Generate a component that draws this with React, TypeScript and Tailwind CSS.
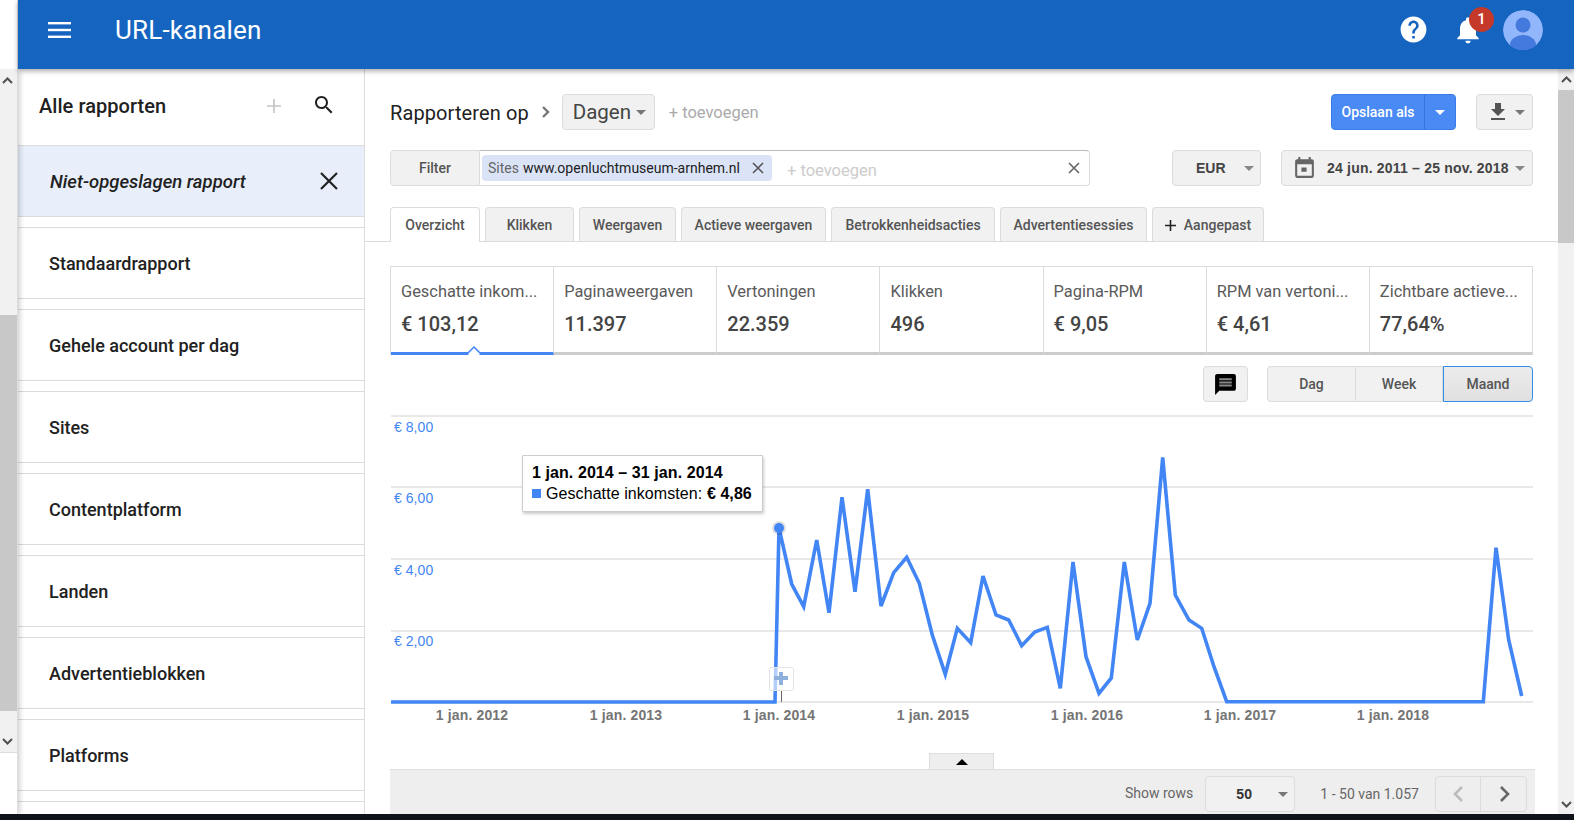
import React from "react";

const pts: [number, number][] = [
  [391, 702], [775, 702], [779, 528], [791.7, 584], [803.7, 606.7], [816.7, 540], [829, 612.7], [842, 497.3],
  [855, 591.7], [867.7, 489.3], [881, 606], [893.7, 572.7], [906.7, 557.3], [919.3, 583.3], [932.3, 635],
  [945.3, 674.3], [957.3, 628.3], [970.7, 642.7], [983, 576], [996, 615], [1008.7, 620], [1021.7, 645.7],
  [1034.7, 632], [1047.3, 627.3], [1060.3, 688.3], [1073, 562], [1086, 656.7], [1099, 693.3], [1111.3, 678],
  [1124.3, 562], [1137.3, 640], [1150, 603.3], [1162.7, 457.3], [1175.3, 595], [1189, 620], [1201.7, 628.3],
  [1214, 666.7], [1226.7, 701.7], [1483.3, 701.7], [1496, 547.7], [1508.7, 640], [1521.7, 696],
];

const Caret = ({ className = "" }: { className?: string }) => (
  <svg width="10" height="5" viewBox="0 0 10 5" className={className}>
    <path d="M0 0h10L5 5z" fill="currentColor" />
  </svg>
);

const Chev = ({ up }: { up?: boolean }) => (
  <svg width="11" height="7" viewBox="0 0 11 7" fill="none" stroke="#505050" strokeWidth="2">
    <path d={up ? "M1 6l4.5-4.5L10 6" : "M1 1l4.5 4.5L10 1"} />
  </svg>
);

const rows = ["Standaardrapport", "Gehele account per dag", "Sites", "Contentplatform", "Landen", "Advertentieblokken", "Platforms"];
const tabs = [
  ["Klikken", "w-[89px]"],
  ["Weergaven", "w-[97px]"],
  ["Actieve weergaven", "w-[145px]"],
  ["Betrokkenheidsacties", "w-[164px]"],
  ["Advertentiesessies", "w-[147px]"],
];
const metrics = [
  ["Geschatte inkom...", "€ 103,12"],
  ["Paginaweergaven", "11.397"],
  ["Vertoningen", "22.359"],
  ["Klikken", "496"],
  ["Pagina-RPM", "€ 9,05"],
  ["RPM van vertoni...", "€ 4,61"],
  ["Zichtbare actieve...", "77,64%"],
];
const arial = { fontFamily: "'Liberation Sans', Arial, sans-serif" };

export default function App() {
  return (
    <div className="w-[1574px] h-[820px] overflow-hidden flex flex-col bg-white font-[family-name:Roboto,sans-serif]">
      <div className="flex h-[69px] shrink-0 relative z-20">
        <div className="w-[18px] bg-white border-r border-[#ddd]" />
        <header className="flex-1 bg-[#1565c0] shadow-[0_2px_5px_rgba(0,0,0,0.35)] flex items-center pb-[10px] text-white">
          <svg width="23" height="16" viewBox="0 0 23 16" className="ml-[30px]" fill="#fff">
            <rect width="23" height="2.4" />
            <rect y="6.8" width="23" height="2.4" />
            <rect y="13.6" width="23" height="2.4" />
          </svg>
          <h1 className="ml-[44px] mt-[2px] text-[26px] tracking-[0.2px] font-normal">URL-kanalen</h1>
          <svg width="31" height="31" viewBox="0 0 24 24" fill="#fff" className="ml-auto">
            <path d="M12 2C6.48 2 2 6.48 2 12s4.48 10 10 10 10-4.48 10-10S17.52 2 12 2zm1 17h-2v-2h2v2zm2.07-7.75l-.9.92C13.45 12.9 13 13.5 13 15h-2v-.5c0-1.1.45-2.1 1.17-2.83l1.24-1.26c.37-.36.59-.86.59-1.41 0-1.1-.9-2-2-2s-2 .9-2 2H8c0-2.21 1.79-4 4-4s4 1.79 4 4c0 .88-.36 1.68-.93 2.25z" />
          </svg>
          <div className="relative ml-[23px] w-[32px] h-[32px]">
            <svg width="32" height="32" viewBox="0 0 24 24" fill="#fff">
              <path d="M12 22c1.1 0 2-.9 2-2h-4c0 1.1.89 2 2 2zm6-6v-5c0-3.07-1.64-5.64-4.5-6.32V4c0-.83-.67-1.5-1.5-1.5s-1.5.67-1.5 1.5v.68C7.63 5.36 6 7.92 6 11v5l-2 2v1h16v-1l-2-2z" />
            </svg>
            <span className="absolute left-[17px] top-[-7px] w-[25px] h-[25px] rounded-full bg-[#c5392b] text-white text-[15px] font-medium flex items-center justify-center">1</span>
          </div>
          <svg width="40" height="40" viewBox="0 0 40 40" className="ml-[19px] mr-[31px] rounded-full">
            <circle cx="20" cy="20" r="20" fill="#92b6fb" />
            <circle cx="20" cy="15" r="7.5" fill="#4479dd" />
            <ellipse cx="20" cy="35" rx="13" ry="10" fill="#4479dd" />
          </svg>
        </header>
      </div>

      <div className="flex h-[745px] shrink-0 overflow-hidden">
        <div className="w-[18px] shrink-0 relative z-10 bg-white border-r border-[#ddd] shadow-[2px_0_5px_rgba(0,0,0,0.18)]">
          <div className="h-[684px] bg-[#f1f1f1] border-b border-[#ddd] flex flex-col">
            <div className="h-[22px] pr-[2px] flex items-center justify-center"><Chev up /></div>
            <div className="h-[224px]" />
            <div className="h-[396px] bg-[#c8c8c8]" />
            <div className="flex-1 pt-[20px] pr-[2px] flex items-center justify-center"><Chev /></div>
          </div>
        </div>

        <aside className="w-[347px] shrink-0 border-r border-[#ddd] overflow-hidden">
          <div className="h-[76px] flex items-center pl-[21px] text-[#212121]">
            <h2 className="text-[20px] tracking-[0.05px] font-medium -mt-[3px]">Alle rapporten</h2>
            <svg width="14" height="14" viewBox="0 0 14 14" stroke="#c4c4c4" strokeWidth="1.6" className="ml-auto -mt-[3px]">
              <path d="M7 0v14M0 7h14" />
            </svg>
            <svg width="24" height="24" viewBox="0 0 24 24" fill="#212121" className="ml-[31px] mr-[28px] -mt-[4px]">
              <path d="M15.5 14h-.79l-.28-.27C15.41 12.59 16 11.11 16 9.5 16 5.91 13.09 3 9.5 3S3 5.91 3 9.5 5.91 16 9.5 16c1.61 0 3.09-.59 4.23-1.57l.27.28v.79l5 4.99L20.49 19l-4.99-5zm-6 0C7.01 14 5 11.99 5 9.5S7.01 5 9.5 5 14 7.01 14 9.5 11.99 14 9.5 14z" />
            </svg>
          </div>
          <div className="h-[72px] bg-[#e8effb] border-y border-[#dcdcdc] flex items-center pl-[32px]">
            <span className="italic mt-[3px] text-[18.5px] font-medium text-[#212121]">Niet-opgeslagen rapport</span>
            <svg width="18" height="18" viewBox="0 0 18 18" stroke="#212121" strokeWidth="2.2" className="ml-auto mr-[26px]">
              <path d="M1 1l16 16M17 1L1 17" />
            </svg>
          </div>
          <div className="flex flex-col gap-[10px] pt-[10px]">
            {rows.map((r) => (
              <div key={r} className="h-[72px] shrink-0 border-y border-[#dcdcdc] flex items-center pl-[31px] text-[18px] font-medium text-[#212121]">
                {r}
              </div>
            ))}
            <div className="h-[72px] shrink-0 border-t border-[#dcdcdc]" />
          </div>
        </aside>

        <main className="w-[1193px] shrink-0 overflow-hidden px-[25px] pt-[25px]">
          <div className="flex items-center h-[36px]">
            <span className="text-[20px] tracking-[0.1px] text-[#212121] mt-[2px]">Rapporteren op</span>
            <svg width="8" height="12" viewBox="0 0 8 12" fill="none" stroke="#777" strokeWidth="2.4" className="ml-[13px]">
              <path d="M1 1l5 5-5 5" />
            </svg>
            <button className="ml-[12px] w-[93px] h-[36px] bg-[#f1f1f1] border border-[#dcdcdc] rounded-sm flex items-center pl-[10px] text-[20.5px] text-[#444]">
              Dagen
              <Caret className="ml-[5px] text-[#777]" />
            </button>
            <span className="ml-[14px] mt-[2px] text-[16.5px] text-[#aaa]">+ toevoegen</span>
            <button className="ml-auto w-[125px] h-[36px] bg-[#4a8af4] border border-[#3b7de8] rounded-sm flex items-center text-white text-[14px] font-medium">
              <span className="w-[93px] h-full flex items-center justify-center border-r border-[#3574dd]">Opslaan als</span>
              <span className="flex-1 flex items-center justify-center"><Caret className="text-white" /></span>
            </button>
            <button className="ml-[20px] w-[57px] h-[36px] bg-[#f1f1f1] border border-[#dcdcdc] rounded-sm flex items-center pl-[9px] text-[#777]">
              <svg width="24" height="24" viewBox="0 0 24 24" fill="#555"><path d="M19 9h-4V3H9v6H5l7 7 7-7zM5 18v2h14v-2H5z" /></svg>
              <Caret className="ml-[5px]" />
            </button>
          </div>

          <div className="flex items-center h-[36px] mt-[20px]">
            <button className="w-[90px] h-full bg-[#f1f1f1] border border-[#dcdcdc] rounded-l-sm text-[14px] font-medium text-[#555]">Filter</button>
            <div className="w-[610px] h-full border border-l-0 border-[#dcdcdc] border-t-[#bbb] rounded-r-sm flex items-center pl-[2px] pr-[9px]">
              <div className="h-[26px] w-[290px] bg-[#dbe4f7] rounded-sm flex items-center pl-[6px] text-[14px] whitespace-nowrap">
                <span className="text-[#666]">Sites</span>
                <span className="ml-[4px] text-[#212121]">www.openluchtmuseum-arnhem.nl</span>
                <svg width="12" height="12" viewBox="0 0 12 12" stroke="#555" strokeWidth="1.6" className="ml-auto mr-[8px]">
                  <path d="M1 1l10 10M11 1L1 11" />
                </svg>
              </div>
              <span className="ml-[15px] mt-[7px] text-[16.5px] text-[#ccc]">+ toevoegen</span>
              <svg width="12" height="12" viewBox="0 0 12 12" stroke="#666" strokeWidth="1.6" className="ml-auto">
                <path d="M1 1l10 10M11 1L1 11" />
              </svg>
            </div>
            <button className="ml-auto w-[89px] h-full bg-[#f1f1f1] border border-[#dcdcdc] rounded-sm flex items-center pl-[23px] text-[14px] font-bold text-[#444]" style={arial}>
              EUR
              <Caret className="ml-[18px] text-[#888]" />
            </button>
            <button className="ml-[20px] w-[252px] h-full bg-[#f1f1f1] border border-[#dcdcdc] rounded-sm flex items-center pl-[10px] text-[14px] font-bold text-[#444] whitespace-nowrap" style={arial}>
              <svg width="25" height="25" viewBox="0 0 24 24" fill="#666">
                <path d="M19 3h-1V1h-2v2H8V1H6v2H5c-1.11 0-2 .9-2 2v14c0 1.1.89 2 2 2h14c1.1 0 2-.9 2-2V5c0-1.1-.9-2-2-2zm0 16H5V8h14v11zM9 11h5v4H9z" />
              </svg>
              <span className="ml-[10px] tracking-[0.2px]">24 jun. 2011 – 25 nov. 2018</span>
              <Caret className="ml-[6px] text-[#888]" />
            </button>
          </div>

          <div className="-mx-[25px] mt-[21px] h-[35px] border-b border-[#dcdcdc] flex items-start pl-[25px] gap-[5px] text-[14px] font-medium text-[#555]">
            <div className="w-[90px] h-[35px] pt-[1px] bg-white border border-b-0 border-[#dcdcdc] rounded-t-sm flex items-center justify-center relative z-10">Overzicht</div>
            {tabs.map(([t, w]) => (
              <div key={t} className={`${w} h-[34px] pt-[1px] bg-[#f1f1f1] border border-b-0 border-[#dcdcdc] rounded-t-sm flex items-center justify-center`}>{t}</div>
            ))}
            <div className="w-[112px] h-[34px] pt-[1px] bg-[#f1f1f1] border border-b-0 border-[#dcdcdc] rounded-t-sm flex items-center justify-center gap-[8px]">
              <svg width="11" height="11" viewBox="0 0 11 11" stroke="#212121" strokeWidth="1.6"><path d="M5.5 0v11M0 5.5h11" /></svg>
              Aangepast
            </div>
          </div>

          <div className="mt-[24px] h-[89px] grid grid-cols-7 border-t border-l border-[#dcdcdc]">
            {metrics.map(([l, v], i) => (
              <div key={l} className={`relative pl-[10px] pt-[15px] border-r border-[#dcdcdc] border-b-[3px] ${i === 0 ? "border-b-[#4285f4]" : "border-b-[#ccc]"}`}>
                <div className="text-[16.4px] leading-[20px] text-[#5a5a5a] whitespace-nowrap">{l}</div>
                <div className="text-[20px] leading-[24px] mt-[10px] font-medium text-[#444]">{v}</div>
                {i === 0 && (
                  <svg width="16" height="9" viewBox="0 0 16 9" className="absolute left-[75px] bottom-[-3px]">
                    <path d="M0 9h2l6-6 6 6h2v0" fill="#fff" />
                    <path d="M1 8l7-7 7 7" fill="#fff" stroke="#4285f4" strokeWidth="1.5" />
                  </svg>
                )}
              </div>
            ))}
          </div>

          <div className="mt-[11px] h-[36px] flex justify-end">
            <button className="w-[45px] h-full bg-[#f1f1f1] border border-[#dcdcdc] rounded-sm flex items-center justify-center pr-[1px]">
              <svg width="25" height="25" viewBox="0 0 24 24">
                <path d="M20 2H4c-1.1 0-1.99.9-1.99 2L2 22l4-4h14c1.1 0 2-.9 2-2V4c0-1.1-.9-2-2-2z" fill="#000" />
                <path d="M6 12h12v2H6zM6 9h12v2H6zM6 6h12v2H6z" fill="#888" />
              </svg>
            </button>
            <div className="ml-[19px] w-[266px] h-full flex text-[14px] font-medium text-[#555]">
              <div className="w-[89px] bg-[#f1f1f1] border border-[#dcdcdc] rounded-l-sm flex items-center justify-center">Dag</div>
              <div className="w-[87px] bg-[#f1f1f1] border-y border-r border-[#dcdcdc] flex items-center justify-center">Week</div>
              <div className="flex-1 bg-gradient-to-b from-[#ececec] to-[#e0e0e0] border border-[#2f8fe8] rounded-r-sm flex items-center justify-center">Maand</div>
            </div>
          </div>

          <div className="relative h-[351px] w-[1143px]">
            <svg width="1143" height="351" viewBox="390 402 1143 351" className="block">
              {[416, 487, 559, 631, 702].map((y) => (
                <line key={y} x1="391" x2="1533" y1={y} y2={y} stroke="#e0e0e0" strokeWidth="1.5" />
              ))}
              {[["€ 8,00", 432], ["€ 6,00", 503], ["€ 4,00", 575], ["€ 2,00", 646]].map(([t, y]) => (
                <text key={t as string} x="394" y={y as number} fontSize="14" letterSpacing="0.05" fill="#4285f4" style={arial}>{t}</text>
              ))}
              {[["1 jan. 2012", 472], ["1 jan. 2013", 626], ["1 jan. 2014", 779], ["1 jan. 2015", 933], ["1 jan. 2016", 1087], ["1 jan. 2017", 1240], ["1 jan. 2018", 1393]].map(([t, x]) => (
                <text key={t as string} x={x as number} y="720" fontSize="14" fontWeight="700" letterSpacing="0.15" fill="#757575" textAnchor="middle" style={arial}>{t}</text>
              ))}
              <polyline points={pts.map((p) => p.join(",")).join(" ")} fill="none" stroke="#4285f4" strokeWidth="3.6" strokeLinejoin="miter" />
              <circle cx="779" cy="528" r="7" fill="#000" opacity="0.12" />
              <circle cx="779" cy="528" r="5" fill="#4285f4" />
              <line x1="781.5" x2="781.5" y1="690" y2="702" stroke="#666" />
              <rect x="769.5" y="667.5" width="24" height="23" rx="2" fill="#fff" fillOpacity="0.6" stroke="#e4e4e4" />
              <path d="M779 672h4v4h5v4h-5v5h-4v-5h-5v-4h5z" fill="#8fb0dc" />
            </svg>
            <div className="absolute left-[132px] top-[53px] w-[241px] h-[57px] bg-white border border-[#ccc] shadow-[1px_2px_3px_rgba(0,0,0,0.2)] rounded-[1px] pl-[9px] pt-[6px] text-[16px] tracking-[0.08px] leading-[21px] text-black whitespace-nowrap" style={arial}>
              <div className="font-bold">1 jan. 2014 – 31 jan. 2014</div>
              <div className="flex items-center">
                <span className="w-[9px] h-[9px] bg-[#4285f4] mr-[5px]" />
                Geschatte inkomsten:&nbsp;<b>€ 4,86</b>
              </div>
            </div>
          </div>

          <div className="h-[16px] ml-[539px] w-[65px] bg-[#eee] border border-b-0 border-[#ddd] flex items-center justify-center">
            <svg width="12" height="6" viewBox="0 0 12 6"><path d="M6 0l6 6H0z" fill="#000" /></svg>
          </div>
          <div className="h-[45px] -mr-[2px] bg-[#eee] border-t border-[#ddd] flex items-center text-[14px] text-[#666]">
            <span className="ml-[735px] mt-[3px]">Show rows</span>
            <button className="ml-[12px] w-[90px] h-[36px] bg-[#f1f1f1] border border-[#dcdcdc] rounded-sm flex items-center pl-[30px] font-bold text-[#333] translate-y-[2px]" style={arial}>
              50
              <Caret className="ml-[26px] text-[#777]" />
            </button>
            <span className="ml-[25px] mt-[5px]">1 - 50 van 1.057</span>
            <div className="ml-[16px] w-[92px] h-[36px] flex border border-[#dcdcdc] rounded-sm translate-y-[2px]">
              <div className="w-[45px] border-r border-[#dcdcdc] flex items-center justify-center">
                <svg width="10" height="16" viewBox="0 0 10 16" fill="none" stroke="#bbb" strokeWidth="2.6"><path d="M9 1L2 8l7 7" /></svg>
              </div>
              <div className="flex-1 flex items-center justify-center pl-[3px]">
                <svg width="10" height="16" viewBox="0 0 10 16" fill="none" stroke="#666" strokeWidth="2.6"><path d="M1 1l7 7-7 7" /></svg>
              </div>
            </div>
          </div>
        </main>

        <div className="w-[16px] shrink-0 bg-[#f1f1f1] flex flex-col">
          <div className="h-[21px] flex items-center justify-center"><Chev up /></div>
          <div className="h-[153px] bg-[#c8c8c8]" />
          <div className="flex-1" />
          <div className="h-[20px] flex items-center justify-center"><Chev /></div>
        </div>
      </div>

      <div className="h-[6px] shrink-0 bg-[#11131a]" />
    </div>
  );
}
